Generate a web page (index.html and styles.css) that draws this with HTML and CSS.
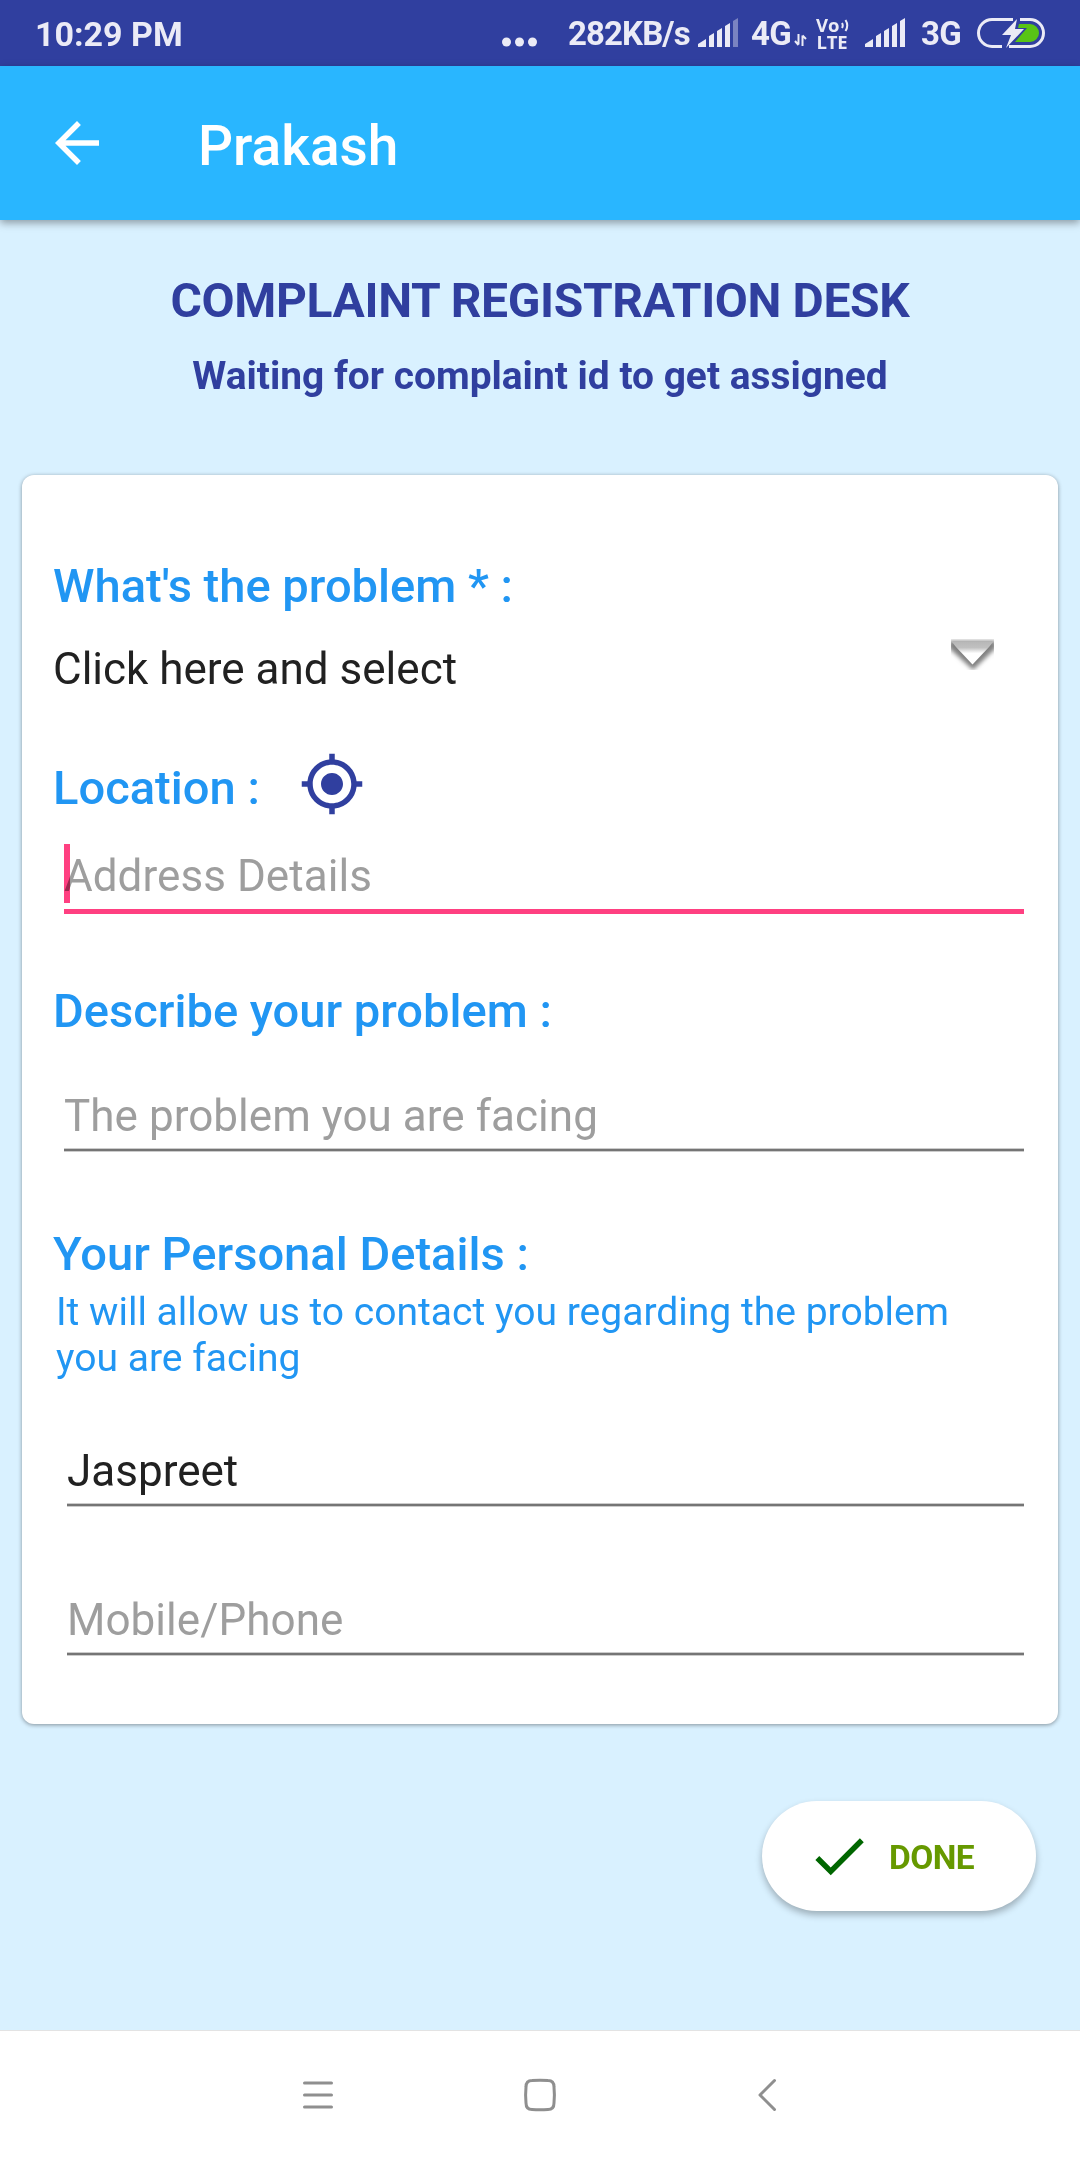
FILE: index.html
```html
<!DOCTYPE html>
<html lang="en">
<head>
<meta charset="utf-8">
<title>Prakash</title>
<link rel="stylesheet" href="styles.css">
</head>
<body>
<div class="status-bar">
  <span class="clock">10:29 PM</span>
  <svg class="dots" width="36" height="10" viewBox="0 0 36 10"><circle cx="4.5" cy="5" r="4.5"/><circle cx="17.5" cy="5" r="4.5"/><circle cx="30.5" cy="5" r="4.5"/></svg>
  <span class="speed">282KB/s</span>
  <svg class="signal" width="40" height="30" viewBox="0 0 40 30"><path d="M0 29V26L8 21V29ZM11 29V18L16 15V29ZM19 29V13L24 10V29ZM27 29V8L32 5V29Z"/><path class="faint" d="M35 29V3L40 0V29Z"/></svg>
  <span class="net-a">4G</span>
  <svg class="updown" width="14" height="14" viewBox="0 0 14 14"><path d="M4.500 0V10.500M1 7L4.500 11M8.500 12V1.500M8.500 1.500L12 5"/></svg>
  <span class="volte"><svg class="volte-waves" width="8" height="13" viewBox="0 0 8 13"><path d="M1 4Q2.500 6.500 1 9M4.500 1Q8 6.500 4.500 12"/></svg><span class="volte-top">Vo</span><span class="volte-bottom">LTE</span></span>
  <svg class="signal signal-b" width="40" height="30" viewBox="0 0 40 30"><path d="M0 29V26L8 21V29ZM11 29V18L16 15V29ZM19 29V13L24 10V29ZM27 29V8L32 5V29ZM35 29V3L40 0V29Z"/></svg>
  <span class="net-b">3G</span>
  <svg class="battery" width="68" height="32" viewBox="0 0 68 32"><path class="shell" d="M25 29.500H15A13.500 13.500 0 0 1 15 2.500H36M43 2.500H53A13.500 13.500 0 0 1 53 29.500H32"/><path class="charge" d="M42 7H53A9 9 0 0 1 53 25H38L50 11H41Z"/><path d="M40 2L25 18H34L29 31L47 12H38Z"/></svg>
</div>
<header class="app-bar">
  <svg class="back" width="66" height="66" viewBox="0 0 24 24"><path d="M20 11H7.830l5.590-5.590L12 4l-8 8 8 8 1.410-1.410L7.830 13H20v-2z"/></svg>
  <h1 class="app-title">Prakash</h1>
</header>
<main class="page">
  <h2 class="heading">COMPLAINT REGISTRATION DESK</h2>
  <p class="subheading">Waiting for complaint id to get assigned</p>
  <section class="card">
    <div class="label label-problem">What's the problem * :</div>
    <div class="select">
      <span class="select-text">Click here and select</span>
      <svg class="caret" width="43" height="31" viewBox="0 0 43 31">
        <defs>
          <filter id="soft" x="-20%" y="-20%" width="140%" height="150%"><feGaussianBlur stdDeviation="2.300"/></filter>
          <linearGradient id="face" x1="0" y1="0" x2="0" y2="1"><stop offset="0" stop-color="#b8b8b8"/><stop offset=".25" stop-color="#c0c0c0"/><stop offset=".5" stop-color="#fff"/></linearGradient>
        </defs>
        <path d="M-2 2H45V9L22 31L-2 9Z" fill="#808080" filter="url(#soft)"/>
        <path d="M1 3H42L38 8L21.500 25.500L5 8Z" fill="url(#face)"/>
      </svg>
    </div>
    <div class="location-row">
      <span class="label label-location">Location :</span>
      <svg class="gps" width="66" height="66" viewBox="0 0 24 24"><path d="M12 8c-2.210 0-4 1.790-4 4s1.790 4 4 4 4-1.790 4-4-1.790-4-4-4zm8.940 3A8.994 8.994 0 0 0 13 3.060V1h-2v2.060A8.994 8.994 0 0 0 3.060 11H1v2h2.060A8.994 8.994 0 0 0 11 20.940V23h2v-2.060A8.994 8.994 0 0 0 20.940 13H23v-2h-2.060zM12 19c-3.870 0-7-3.130-7-7s3.130-7 7-7 7 3.130 7 7-3.130 7-7 7z"/></svg>
    </div>
    <div class="field field-address"><span class="hint">Address Details</span><span class="cursor"></span></div>
    <div class="label label-describe">Describe your problem :</div>
    <div class="field field-describe"><span class="hint">The problem you are facing</span></div>
    <div class="label label-personal">Your Personal Details :</div>
    <p class="note">It will allow us to contact you regarding the problem<br>you are facing</p>
    <div class="field field-name"><span class="value">Jaspreet</span></div>
    <div class="field field-phone"><span class="hint">Mobile/Phone</span></div>
  </section>
  <button class="done" type="button">
    <svg class="check" width="66" height="66" viewBox="0 0 24 24"><path d="M9 16.170L4.830 12l-1.420 1.410L9 19 21 7l-1.410-1.410z"/></svg>
    <span class="done-text">DONE</span>
  </button>
</main>
<nav class="nav-bar">
  <svg width="32" height="34" viewBox="0 0 32 34"><path d="M2.500 5H29.500M2.500 17H29.500M2.500 29H29.500"/></svg>
  <svg width="34" height="34" viewBox="0 0 34 34"><path d="M9 2.500Q17 1.800 25 2.500Q31 2.500 31 9Q31.800 17 31 25Q31 31.500 25 31.500Q17 32.200 9 31.500Q3 31.500 3 25Q2.200 17 3 9Q3 2.500 9 2.500Z"/></svg>
  <svg width="20" height="34" viewBox="0 0 20 34"><path d="M17.500 2.500L3 17L17.500 31.500"/></svg>
</nav>
</body>
</html>
```
FILE: styles.css
```css
* {
  box-sizing: border-box;
  margin: 0;
  padding: 0;
}

body {
  width: 1080px;
  height: 2160px;
  display: flex;
  flex-direction: column;
  overflow: hidden;
  background: #d9f1ff;
  font-family: Roboto, "Liberation Sans", sans-serif;
  white-space: nowrap;
}

svg {
  display: block;
  flex: none;
}

.status-bar {
  height: 66px;
  flex: none;
  display: flex;
  align-items: flex-start;
  padding-left: 35px;
  background: #303f9f;
  color: #ebebf6;
  fill: #ebebf6;
  font-size: 33px;
  font-weight: 700;
  line-height: 68px;
}

.clock { width: 467px; font-size: 34px; }
.dots { margin-top: 37px; }
.speed { margin-left: 30px; width: 130px; letter-spacing: -0.9px; }
.signal { margin-top: 18px; }
.faint { opacity: 0.4; }
.net-a { margin-left: 13px; width: 43px; letter-spacing: -0.6px; }

.updown {
  margin-top: 34px;
  fill: none;
  stroke: #ebebf6;
  stroke-width: 2;
}

.volte {
  position: relative;
  display: flex;
  flex-direction: column;
  width: 34px;
  margin: 17px 0 0 8px;
  font-family: "Open Sans", sans-serif;
  font-weight: 700;
}

.volte-top { font-size: 18.500px; line-height: 16px; }
.volte-bottom { font-size: 18.500px; line-height: 18px; padding-left: 0.500px; letter-spacing: -0.2px; }

.volte-waves {
  position: absolute;
  left: 25px;
  top: 2px;
  fill: none;
  stroke: #ebebf6;
  stroke-width: 2;
}

.signal-b { margin-left: 15px; }
.net-b { margin-left: 16px; width: 56px; letter-spacing: -0.6px; }
.battery { margin-top: 17px; }
.shell { fill: none; stroke: #ebebf6; stroke-width: 3; }
.charge { fill: #58c415; }

.app-bar {
  height: 154px;
  flex: none;
  display: flex;
  align-items: flex-start;
  padding-left: 44px;
  background: #29b6ff;
  color: #fff;
  fill: #fff;
  box-shadow: 0 3px 8px rgba(0, 0, 0, 0.36);
}

.back { margin-top: 44px; }

.app-title {
  margin: 40px 0 0 88px;
  font-size: 55px;
  font-weight: 500;
  line-height: 80px;
}

.page {
  flex: 1;
  display: flex;
  flex-direction: column;
}

.heading {
  margin-top: 51px;
  text-align: center;
  color: #303f9f;
  font-size: 48px;
  font-weight: 700;
  line-height: 60px;
  letter-spacing: -0.360px;
}

.subheading {
  margin-top: 15px;
  text-align: center;
  color: #303f9f;
  font-size: 38.900px;
  font-weight: 700;
  line-height: 60px;
}

.card {
  width: 1036px;
  height: 1249px;
  margin: 69px 0 0 22px;
  padding: 81px 34px 0 31px;
  display: flex;
  flex-direction: column;
  border-radius: 12px;
  background: #fff;
  box-shadow: 0 1px 4px rgba(0, 0, 0, 0.4);
}

.label {
  color: #2196f3;
  font-size: 47.100px;
  font-weight: 500;
  line-height: 60px;
}

.select {
  display: flex;
  justify-content: space-between;
  align-items: flex-start;
  margin-top: 23px;
  padding-right: 30px;
}

.select-text {
  color: #212121;
  font-size: 44px;
  line-height: 60px;
}

.location-row {
  display: flex;
  align-items: center;
  height: 66px;
  margin-top: 52px;
}

.label-location {
  width: 246px;
  padding-top: 8px;
}

.gps { fill: #303f9f; }

.field {
  position: relative;
  margin-left: 11px;
  border-bottom: 2px solid #757575;
  box-shadow: 0 1px #ccc, inset 0 -1px #ccc;
  font-size: 44px;
  line-height: 60px;
}

.hint { color: #9e9e9e; letter-spacing: 0.050px; }
.value { color: #212121; }

.field-address {
  height: 68px;
  margin-top: 29px;
  border-bottom: 5px solid #ff4081;
  box-shadow: none;
}

.cursor {
  position: absolute;
  left: 0;
  top: -2px;
  width: 6px;
  height: 59px;
  background: #ff4081;
  mix-blend-mode: multiply;
}

.label-describe { margin-top: 67px; }
.field-describe { height: 65px; margin-top: 45px; }
.label-personal { margin-top: 73px; }

.note {
  margin: 5px 0 0 3px;
  color: #2196f3;
  font-size: 39.050px;
  line-height: 46px;
}

.field-name { height: 65px; margin: 60px 0 0 14px; }
.field-phone { height: 65px; margin: 84px 0 0 14px; }

.done {
  width: 274px;
  height: 110px;
  margin: 77px 0 0 762px;
  padding: 0 0 0 44px;
  display: flex;
  align-items: center;
  border: 0;
  border-radius: 55px;
  background: #fff;
  box-shadow: 0 4px 7px rgba(0, 0, 0, 0.28);
  font-family: inherit;
}

.check { fill: #060; }

.done-text {
  margin-left: 17px;
  padding-top: 2px;
  color: #690;
  font-size: 33.500px;
  font-weight: 700;
  letter-spacing: -0.600px;
}

.nav-bar {
  height: 130px;
  flex: none;
  display: flex;
  align-items: flex-start;
  padding: 47px 0 0 302px;
  border-top: 1px solid #e3e3e3;
  background: #fff;
  fill: none;
  stroke: #8f8f8f;
  stroke-width: 3;
  stroke-linecap: round;
  stroke-linejoin: round;
  gap: 0 189px;
}

.nav-bar svg:last-child { margin-left: 11px; }
```
